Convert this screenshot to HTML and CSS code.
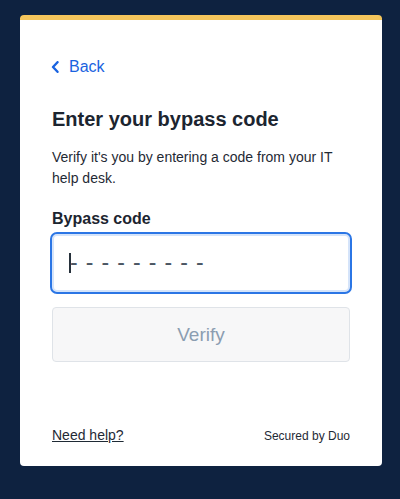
FILE: index.html
```html
<!DOCTYPE html>
<html lang="en">
<head>
<meta charset="utf-8">
<title>Enter your bypass code</title>
<link rel="stylesheet" href="styles.css">
</head>
<body>
<main class="card">
  <a class="back" href="#">
    <svg class="chev" width="8" height="12" viewBox="0 0 8 12" aria-hidden="true"><path d="M6.5 1.2 L2 6 L6.5 10.8" fill="none" stroke="#1a63e0" stroke-width="2.4" stroke-linecap="round" stroke-linejoin="round"/></svg>
    <span>Back</span>
  </a>
  <h1 class="title">Enter your bypass code</h1>
  <p class="desc">Verify it's you by entering a code from your IT help desk.</p>
  <label class="label">Bypass code</label>
  <div class="field"><span class="caret"></span><span class="dashes">---------</span></div>
  <button class="verify" type="button">Verify</button>
  <footer class="foot">
    <a class="help" href="#">Need help?</a>
    <span class="secured">Secured by Duo</span>
  </footer>
</main>
</body>
</html>
```
FILE: styles.css
```css
html, body {
  margin: 0;
  padding: 0;
  background: #0e2240;
}
body {
  padding: 15px 18px 33px 20px;
  font-family: "Liberation Sans", Arial, sans-serif;
  color: #1f2a35;
}
.card {
  width: 362px;
  box-sizing: border-box;
  background: #fff;
  border-top: 5px solid #f3c55c;
  border-radius: 4px;
  padding: 37px 32px 21px;
  display: flex;
  flex-direction: column;
}
.back {
  display: flex;
  align-items: center;
  gap: 10px;
  height: 20px;
  font-size: 16px;
  line-height: 20px;
  color: #1a63e0;
  text-decoration: none;
}
.chev { display: block; margin-left: -1px; }
.title {
  margin: 30px 0 0;
  font-size: 20px;
  line-height: 24px;
  font-weight: 700;
  color: #1c2530;
}
.desc {
  margin: 16px 0 0;
  font-size: 14px;
  line-height: 21px;
  color: #1f2a35;
}
.label {
  margin-top: 20px;
  font-size: 16px;
  line-height: 20px;
  font-weight: 700;
  color: #1c2530;
}
.field {
  margin: 3px -2px 0;
  height: 62px;
  box-sizing: border-box;
  border: 2px solid #2b76e5;
  border-radius: 7px;
  box-shadow: inset 0 0 0 2px #d5e4fa;
  display: flex;
  align-items: center;
  padding-left: 17px;
}
.caret {
  width: 2px;
  height: 20px;
  background: #27313b;
}
.dashes {
  font-size: 23px;
  line-height: 20px;
  letter-spacing: 8.1px;
  color: #4b5663;
  position: relative;
  top: -1px;
  left: -1px;
}
.verify {
  margin-top: 13px;
  height: 55px;
  border: 1px solid #dfe3e8;
  border-radius: 4px;
  background: #f7f7f8;
  color: #8b9db1;
  font-family: "Liberation Sans", Arial, sans-serif;
  font-size: 19px;
  padding: 0;
}
.foot {
  margin-top: 63px;
  display: flex;
  justify-content: space-between;
  align-items: baseline;
  height: 20px;
  line-height: 20px;
}
.help {
  font-size: 14px;
  color: #1f2a35;
  text-decoration: underline;
}
.secured {
  font-size: 12px;
  color: #1f2a35;
}
```
